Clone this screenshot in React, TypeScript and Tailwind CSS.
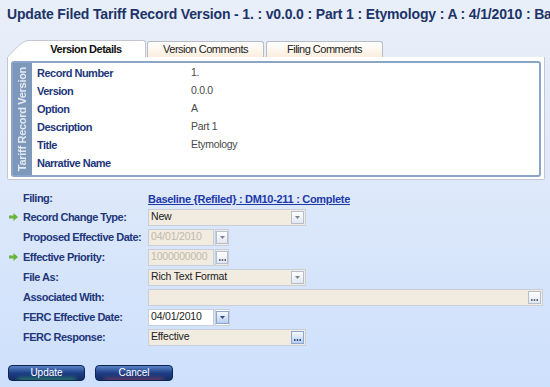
import React from "react";

const labelCls = "text-[11px] font-bold tracking-[-0.5px] text-[#22377a]";

const DropBtn = ({ blue = false }: { blue?: boolean }) => (
  <span
    className={`flex h-[13px] w-[13px] items-center justify-center border ${
      blue ? "border-[#8ea6cc] bg-gradient-to-b from-[#f4f8ff] to-[#b9cff0]" : "border-[#b6bfcd] bg-gradient-to-b from-white to-[#e3e7ee]"
    }`}
  >
    <svg width="5" height="3" viewBox="0 0 5 3">
      <path d="M0 0h5L2.5 3z" fill={blue ? "#2c4a86" : "#7b8598"} />
    </svg>
  </span>
);

const DotsBtn = ({ blue = false }: { blue?: boolean }) => (
  <span
    className={`flex h-[13px] w-[13px] items-end justify-center pb-[2px] border ${
      blue ? "border-[#8ea6cc] bg-gradient-to-b from-[#f4f8ff] to-[#b9cff0]" : "border-[#b6bfcd] bg-gradient-to-b from-white to-[#e3e7ee]"
    }`}
  >
    <svg width="7" height="2" viewBox="0 0 7 2">
      <rect x="0" y="0" width="1.5" height="2" fill={blue ? "#2c4a86" : "#5b6780"} />
      <rect x="2.75" y="0" width="1.5" height="2" fill={blue ? "#2c4a86" : "#5b6780"} />
      <rect x="5.5" y="0" width="1.5" height="2" fill={blue ? "#2c4a86" : "#5b6780"} />
    </svg>
  </span>
);

const Field = ({
  width,
  value,
  disabled,
  white,
  btn,
}: {
  width: string;
  value?: string;
  disabled?: boolean;
  white?: boolean;
  btn?: React.ReactNode;
}) => (
  <div
    className={`flex h-[17px] items-center justify-between border border-[#c9cfd9] pl-[2px] pr-[1px] ${width} ${
      white ? "bg-white" : "bg-[#f1ebe0]"
    }`}
  >
    <span className={`text-[10.5px] tracking-[-0.2px] ${disabled ? "text-[#c2b9ab]" : "text-[#222]"}`}>{value}</span>
    {btn}
  </div>
);

const Arrow = () => (
  <svg width="9" height="8" viewBox="0 0 9 8">
    <path d="M0 2.5h4.5V0L9 4 4.5 8V5.5H0z" fill="#6cb33f" />
  </svg>
);

const Row = ({ label, arrow, children, h = "h-5" }: { label: string; arrow?: boolean; children: React.ReactNode; h?: string }) => (
  <div className={`flex items-center ${h}`}>
    <div className="flex w-[23px] justify-center pl-[3px]">{arrow && <Arrow />}</div>
    <div className={`w-[125px] whitespace-nowrap ${labelCls}`}>{label}</div>
    <div className="flex-1">{children}</div>
  </div>
);

const details = [
  ["Record Number", "1."],
  ["Version", "0.0.0"],
  ["Option", "A"],
  ["Description", "Part 1"],
  ["Title", "Etymology"],
  ["Narrative Name", ""],
];

export default function App() {
  return (
    <div
      className="flex h-[387px] w-[550px] flex-col overflow-hidden bg-gradient-to-b from-[#e9eff9] via-[#dde8fa] to-[#cde0fc]"
      style={{ fontFamily: '"Liberation Sans", Arial, sans-serif' }}
    >
      <div className="h-[40px] whitespace-nowrap pl-[7px] pt-[4px] text-[14px] font-bold tracking-[-0.15px] text-[#1c3468]">
        Update Filed Tariff Record Version - 1. : v0.0.0 : Part 1 : Etymology : A : 4/1/2010 : Ba
      </div>

      {/* tabs */}
      <div className="flex h-[17px] items-end pl-[8px]">
        <svg width="20" height="17" viewBox="0 0 20 17" className="-mr-px">
          <path d="M0 17 C6 11 12 2 20 0.5 V17z" fill="#fff" />
          <path d="M0 16.5 C6 11 12 2 20 0.5" fill="none" stroke="#c3c8d0" />
        </svg>
        <div className="flex h-[17px] w-[119px] items-center justify-center rounded-tr-[3px] border-r border-t border-[#c3c8d0] bg-white text-[11px] font-bold tracking-[-0.5px] text-[#111]">
          Version Details
        </div>
        <div className="ml-px flex h-[16px] w-[117px] items-center justify-center rounded-t-[3px] border border-b-0 border-[#b7bcc5] bg-gradient-to-b from-white to-[#fbeedd] text-[11px] tracking-[-0.5px] text-[#222]">
          Version Comments
        </div>
        <div className="ml-[2px] flex h-[16px] w-[117px] items-center justify-center rounded-t-[3px] border border-b-0 border-[#b7bcc5] bg-gradient-to-b from-white to-[#fbeedd] text-[11px] tracking-[-0.5px] text-[#222]">
          Filing Comments
        </div>
      </div>

      {/* panel */}
      <div className="ml-[7px] h-[123px] w-[538px] rounded-b-[2px] border border-t-0 border-[#c3c8d0] bg-white px-[3px] pb-[2px] pt-[4px]">
        <div className="flex h-full rounded-[3px] border-2 border-[#8aa5c7]">
          <div className="flex w-[19px] items-center justify-center bg-[#7d98ba]">
            <span className="rotate-180 whitespace-nowrap text-[11px] font-bold tracking-[-0.3px] text-[#e3eaf3] [writing-mode:vertical-rl]">
              Tariff Record Version
            </span>
          </div>
          <div className="flex flex-col pl-[5px] pt-[1px]">
            {details.map(([k, v]) => (
              <div key={k} className="flex h-[18px] items-center">
                <div className={`w-[154px] ${labelCls}`}>{k}</div>
                <div className="text-[10.5px] tracking-[-0.3px] text-[#4a4a4a]">{v}</div>
              </div>
            ))}
          </div>
        </div>
      </div>

      {/* form */}
      <div className="mt-[9px] flex flex-col">
        <Row label="Filing:" h="h-[18px]">
          <a href="#" className="text-[11px] font-bold tracking-[-0.3px] text-[#1d3aa8] underline">
            Baseline {"{Refiled}"} : DM10-211 : Complete
          </a>
        </Row>
        <Row label="Record Change Type:" arrow>
          <Field width="w-[158px]" value="New" btn={<DropBtn />} />
        </Row>
        <Row label="Proposed Effective Date:">
          <div className="flex gap-px">
            <Field width="w-[66px]" value="04/01/2010" disabled />
            <div className="flex h-[17px] w-[14px] items-center justify-center border border-[#c9cfd9] bg-[#f1ebe0]">
              <DropBtn />
            </div>
          </div>
        </Row>
        <Row label="Effective Priority:" arrow>
          <div className="flex gap-px">
            <Field width="w-[66px]" value="1000000000" disabled />
            <div className="flex h-[17px] w-[14px] items-center justify-center border border-[#c9cfd9] bg-[#f1ebe0]">
              <DotsBtn />
            </div>
          </div>
        </Row>
        <Row label="File As:">
          <Field width="w-[158px]" value="Rich Text Format" btn={<DropBtn />} />
        </Row>
        <Row label="Associated With:">
          <Field width="w-[395px]" btn={<DotsBtn />} />
        </Row>
        <Row label="FERC Effective Date:">
          <div className="flex gap-px">
            <Field width="w-[66px]" value="04/01/2010" white />
            <div className="flex h-[17px] w-[15px] items-center justify-center border border-[#c9cfd9] bg-white">
              <DropBtn blue />
            </div>
          </div>
        </Row>
        <Row label="FERC Response:">
          <Field width="w-[158px]" value="Effective" btn={<DotsBtn blue />} />
        </Row>
      </div>

      {/* buttons */}
      <div className="mt-[18px] flex gap-[10px] pl-[8px]">
        <button className="relative h-[16px] w-[77px] overflow-hidden rounded-[4px] border border-[#0d2350] bg-gradient-to-b from-[#5a84c8] via-[#1e3f86] to-[#132c63] text-[10px] text-white">
          <span className="absolute inset-x-[8px] -bottom-[2px] h-[4px] rounded-full bg-[#3fbf6a] opacity-60 blur-[2px]" />
          <span className="relative -top-px">Update</span>
        </button>
        <button className="relative h-[16px] w-[78px] overflow-hidden rounded-[4px] border border-[#0d2350] bg-gradient-to-b from-[#5a84c8] via-[#1e3f86] to-[#132c63] text-[10px] text-white">
          <span className="absolute inset-x-[8px] -bottom-[2px] h-[4px] rounded-full bg-[#b04a6a] opacity-60 blur-[2px]" />
          <span className="relative -top-px">Cancel</span>
        </button>
      </div>
    </div>
  );
}
